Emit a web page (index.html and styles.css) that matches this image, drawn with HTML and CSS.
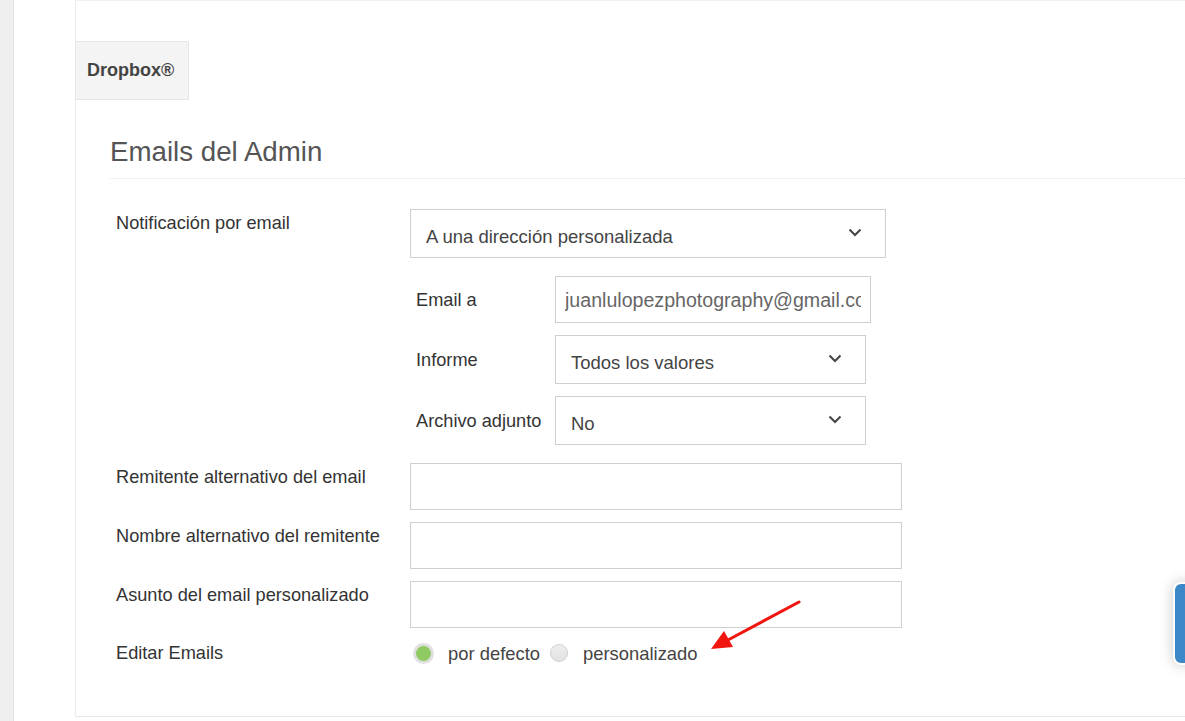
FILE: index.html
```html
<!DOCTYPE html>
<html lang="es">
<head>
  <meta charset="UTF-8">
  <meta name="viewport" content="width=device-width, initial-scale=1.0">
  <title>Emails del Admin</title>
  <link rel="stylesheet" href="styles.css">
</head>
<body>
  <div class="page">
    <div class="rail"></div>
    <div class="gutter"></div>
    <div class="panel">
      <div class="tab">Dropbox&reg;</div>
      <div class="section">
        <h2 class="title">Emails del Admin</h2>
        <div class="form">
          <div class="row">
            <label class="label">Notificación por email</label>
            <div class="field">
              <div class="select wide">
                <span>A una dirección personalizada</span>
                <svg class="chev" width="14" height="9" viewBox="0 0 14 9"><polyline points="1.5,1.5 7,7 12.5,1.5" fill="none" stroke="#444" stroke-width="2"/></svg>
              </div>
              <div class="sub">
                <div class="subrow">
                  <label class="sublabel">Email a</label>
                  <input class="input email" type="text" value="juanlulopezphotography@gmail.com" readonly>
                </div>
                <div class="subrow">
                  <label class="sublabel">Informe</label>
                  <div class="select small">
                    <span>Todos los valores</span>
                    <svg class="chev" width="14" height="9" viewBox="0 0 14 9"><polyline points="1.5,1.5 7,7 12.5,1.5" fill="none" stroke="#444" stroke-width="2"/></svg>
                  </div>
                </div>
                <div class="subrow">
                  <label class="sublabel">Archivo adjunto</label>
                  <div class="select small">
                    <span>No</span>
                    <svg class="chev" width="14" height="9" viewBox="0 0 14 9"><polyline points="1.5,1.5 7,7 12.5,1.5" fill="none" stroke="#444" stroke-width="2"/></svg>
                  </div>
                </div>
              </div>
            </div>
          </div>
          <div class="row">
            <label class="label">Remitente alternativo del email</label>
            <div class="input text"></div>
          </div>
          <div class="row">
            <label class="label">Nombre alternativo del remitente</label>
            <div class="input text"></div>
          </div>
          <div class="row">
            <label class="label">Asunto del email personalizado</label>
            <div class="input text"></div>
          </div>
          <div class="row radios-row">
            <label class="label">Editar Emails</label>
            <div class="radios">
              <span class="radio on"></span>
              <span class="radio-text">por defecto</span>
              <span class="radio off"></span>
              <span class="radio-text">personalizado</span>
            </div>
          </div>
        </div>
      </div>
    </div>
  </div>

  <!-- flecha roja de anotación -->
  <svg class="arrow" width="1185" height="721" viewBox="0 0 1185 721">
    <line x1="799" y1="602" x2="728" y2="640" stroke="#f0150f" stroke-width="3" stroke-linecap="round"/>
    <polygon points="711,649 724,631 733,647" fill="#f0150f"/>
  </svg>

  <div class="side-tab"></div>
</body>
</html>
```

FILE: styles.css
```css
* {
  margin: 0;
  padding: 0;
  box-sizing: border-box;
}
body {
  background: #fff;
  font-family: "Liberation Sans", Arial, sans-serif;
  color: #333;
  overflow: hidden;
}
.page {
  display: flex;
  height: 721px;
}
.rail {
  width: 14px;
  background: #efefef;
  border-right: 1px solid #e4e4e4;
}
.gutter {
  width: 61px;
}
.panel {
  flex: 1;
  height: 717px;
  border-left: 1px solid #ececec;
  border-top: 1px solid #f2f2f2;
  border-bottom: 1px solid #e8e8e8;
  padding-top: 40px;
}

/* pestaña */
.tab {
  width: 114px;
  height: 59px;
  margin-left: -1px;
  padding-left: 11px;
  background: #f4f4f4;
  border: 1px solid #e6e6e6;
  font-weight: bold;
  font-size: 18px;
  line-height: 57px;
  color: #444;
}

.section {
  padding-left: 34px;
}
.title {
  margin-top: 37px;
  padding-bottom: 11px;
  font-size: 27.7px;
  line-height: 30px;
  font-weight: normal;
  color: #555;
  border-bottom: 1px dotted #e2e2e2;
}

.form {
  margin-top: 30px;
}
.row {
  display: flex;
  align-items: flex-start;
  margin-bottom: 12px;
}
.label {
  width: 300px;
  padding-left: 6px;
  padding-top: 4px;
  font-size: 18.2px;
  line-height: 20px;
  color: #333;
}
.sub {
  margin-top: 18px;
  margin-bottom: 6px;
}
.subrow {
  display: flex;
  align-items: center;
  margin-bottom: 12px;
}
.subrow:last-child {
  margin-bottom: 0;
}
.sublabel {
  width: 145px;
  padding-left: 6px;
  font-size: 18.2px;
  line-height: 20px;
  color: #333;
}

.select,
.input {
  border: 1px solid #cfcfcf;
  background: #fff;
  font-family: inherit;
  font-size: 18.5px;
  color: #444;
}
.select {
  display: flex;
  align-items: center;
  justify-content: space-between;
  padding: 0 23px 0 15px;
  height: 49px;
}
.select span {
  padding-top: 6px;
}
.select .chev {
  margin-top: -2px;
}
.select.wide {
  width: 476px;
}
.select.small {
  width: 311px;
}
.input.email {
  width: 316px;
  height: 47px;
  padding: 2px 9px 0;
  font-size: 19.6px;
  color: #666;
  outline: none;
}
.input.text {
  width: 492px;
  height: 47px;
}

/* radios */
.radios-row {
  margin-top: 12px;
}
.radios-row .label {
  padding-top: 3px;
}
.radios {
  display: flex;
  align-items: center;
  height: 26px;
  padding-left: 3px;
  font-size: 18.4px;
  color: #444;
}
.radio {
  display: inline-block;
  border-radius: 50%;
}
.radio.on {
  width: 21px;
  height: 21px;
  background: #8fca62;
  border: 3px solid #e0e0e0;
  margin-right: 14px;
}
.radio.off {
  width: 18px;
  height: 18px;
  background: linear-gradient(#eee, #e2e2e2);
  border: 1px solid #d0d0d0;
  margin: 0 15px 0 10px;
}
.radio-text {
  padding-top: 2px;
}

/* anotación */
.arrow {
  position: absolute;
  top: 0;
  left: 0;
  pointer-events: none;
}
.side-tab {
  position: absolute;
  top: 582px;
  right: -10px;
  width: 22px;
  height: 83px;
  background: #3c87c7;
  border: 2px solid #fff;
  border-radius: 8px;
  box-shadow: 0 0 14px rgba(0, 0, 0, .22);
}
```
